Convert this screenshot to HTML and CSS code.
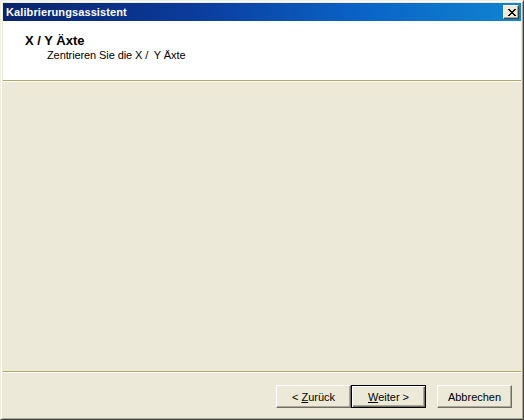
FILE: index.html
```html
<!DOCTYPE html>
<html>
<head>
<meta charset="utf-8">
<link rel="stylesheet" href="styles.css">
</head>
<body>
<div class="window">
  <div class="titlebar">
    <span class="title">Kalibrierungsassistent</span>
    <span class="close">
      <svg width="8" height="7" viewBox="0 0 8 7"><path d="M0 0h2v1h1v1h2v-1h1v-1h2v1h-1v1h-1v1h-1v1h1v1h1v1h1v1h-2v-1h-1v-1h-2v1h-1v1h-2v-1h1v-1h1v-1h1v-1h-1v-1h-1v-1h-1z" fill="#000"/></svg>
    </span>
  </div>
  <div class="header">
    <div class="heading">X / Y Äxte</div>
    <div class="sub">Zentrieren Sie die X /&nbsp; Y Äxte</div>
  </div>
  <div class="content"></div>
  <div class="footer">
    <button class="btn"><span>&lt; <u>Z</u>urück</span></button>
    <button class="btn default"><span><u>W</u>eiter &gt;</span></button>
    <button class="btn cancel"><span>Abbrechen</span></button>
  </div>
</div>
</body>
</html>
```

FILE: styles.css
```css
html, body {
  margin: 0;
  padding: 0;
  background: #ECE9D8;
}
.window {
  width: 524px;
  height: 420px;
  box-sizing: border-box;
  display: flex;
  flex-direction: column;
  background: #ECE9D8;
  border-style: solid;
  border-width: 1px;
  border-color: #F1EFE2 #404040 #404040 #F1EFE2;
  box-shadow: inset 1px 1px 0 #FFFFFF, inset -1px -1px 0 #ACA899;
  padding: 2px;
  font-family: "Liberation Sans", Arial, sans-serif;
  font-size: 11px;
}
.titlebar {
  height: 18px;
  flex: none;
  display: flex;
  align-items: center;
  justify-content: space-between;
  background: linear-gradient(to right, #0A246A 0%, #0A3A9A 35%, #0A64C8 70%, #1084D0 100%);
  padding: 0 2px 0 3px;
}
.title {
  color: #fff;
  font-weight: bold;
  font-size: 11px;
  letter-spacing: 0.1px;
}
.close {
  width: 16px;
  height: 14px;
  box-sizing: border-box;
  background: #ECE9D8;
  border: 1px solid;
  border-color: #FFFFFF #404040 #404040 #FFFFFF;
  box-shadow: inset -1px -1px 0 #ACA899;
  display: flex;
  align-items: center;
  justify-content: center;
}
.close svg { display: block; margin-left: 1px; }
.header {
  flex: none;
  height: 60px;
  box-sizing: border-box;
  background: #FFFFFF;
  border-bottom: 1px solid #ADA86C;
  box-shadow: 0 1px 0 #FFFFFF;
  padding: 12px 0 0 22px;
  margin-bottom: 1px;
}
.heading {
  font-weight: bold;
  font-size: 13px;
  color: #000;
  line-height: 15px;
}
.sub {
  padding-left: 22px;
  color: #000;
  line-height: 14px;
  letter-spacing: -0.1px;
}
.content {
  flex: 1;
}
.footer {
  flex: none;
  height: 46px;
  box-sizing: border-box;
  border-top: 1px solid #ADA86C;
  box-shadow: inset 0 1px 0 #FFFFFF;
  display: flex;
  justify-content: flex-end;
  align-items: flex-start;
  padding: 13px 9px 0 0;
}
.btn {
  width: 75px;
  height: 23px;
  box-sizing: border-box;
  margin: 0;
  padding: 0;
  background: #ECE9D8;
  font-family: "Liberation Sans", Arial, sans-serif;
  font-size: 11px;
  color: #000;
  border: 1px solid;
  border-color: #FFFFFF #716F64 #716F64 #FFFFFF;
  box-shadow: inset -1px -1px 0 #ACA899;
  display: flex;
  align-items: center;
  justify-content: center;
}
.btn.default {
  border: 1px solid #000;
  box-shadow: inset 1px 1px 0 #FFFFFF, inset -1px -1px 0 #716F64, inset -2px -2px 0 #ACA899;
}
.btn.cancel {
  margin-left: 11px;
}
```
